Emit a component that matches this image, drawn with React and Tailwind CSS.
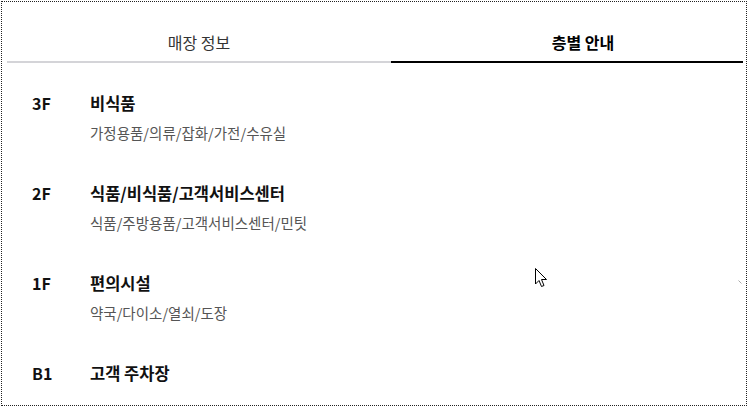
import React from "react";

const floors = [
  { f: "3F", title: "비식품", sub: "가정용품/의류/잡화/가전/수유실" },
  { f: "2F", title: "식품/비식품/고객서비스센터", sub: "식품/주방용품/고객서비스센터/민팃" },
  { f: "1F", title: "편의시설", sub: "약국/다이소/열쇠/도장" },
  { f: "B1", title: "고객 주차장", sub: null },
];

export default function App() {
  return (
    <div
      className="relative w-[750px] h-[408px] bg-white overflow-hidden"
      style={{ fontFamily: '"Noto Sans CJK KR", "Noto Sans", sans-serif' }}
    >
      <div className="absolute left-[1px] top-[1px] w-[746px] h-[405px] border border-dotted border-[#222]" />
      <div className="ml-[7px] w-[736px] pt-[21px]">
        <div className="overflow-hidden">
          <div className="flex w-[768px]">
            <div className="w-[384px] h-[42px] pt-[2px] flex items-center justify-center border-b-2 border-[#d4d4d8] text-[16px] leading-[20px] text-[#333]">
              매장 정보
            </div>
            <div className="w-[384px] h-[42px] pt-[2px] flex items-center justify-center border-b-2 border-black text-[16px] leading-[20px] font-bold text-black">
              층별 안내
            </div>
          </div>
        </div>
        <div className="pt-[30px] flex flex-col">
          {floors.map((r) => (
            <div key={r.f} className="flex h-[90px]">
              <div className="w-[83px] pl-[25px] text-[16px] leading-[20px] font-bold text-[#111]">
                {r.f}
              </div>
              <div className="flex flex-col">
                <div className="text-[16.5px] leading-[20px] font-bold text-[#111]">{r.title}</div>
                {r.sub && (
                  <div className="mt-[10px] text-[14.5px] leading-[20px] text-[#555]">{r.sub}</div>
                )}
              </div>
            </div>
          ))}
        </div>
      </div>
      <svg className="absolute left-[535px] top-[268px]" width="13" height="20" viewBox="0 0 13 20">
        <path d="M0.5 0.5 L0.5 16 L4 12.5 L6.5 18.5 L9 17.5 L6.5 11.5 L11.5 11.5 Z" fill="white" stroke="black" strokeWidth="1" strokeLinejoin="miter" />
      </svg>
      <svg className="absolute left-[738px] top-[280px]" width="4" height="4" viewBox="0 0 4 4">
        <path d="M0.5 0.5 L3.5 3.5" stroke="#aaa" strokeWidth="1" />
      </svg>
    </div>
  );
}
